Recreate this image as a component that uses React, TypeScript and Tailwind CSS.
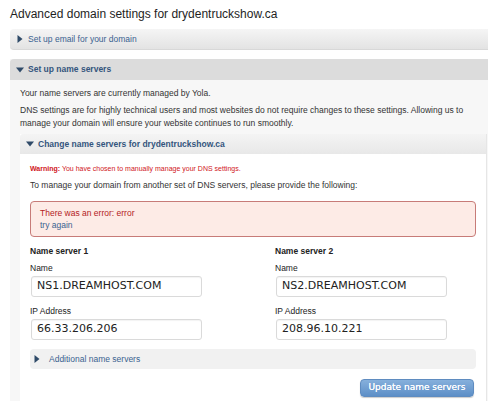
import React from 'react';

const sans = { fontFamily: '"Liberation Sans", Arial, sans-serif' };

function Arrow({ open }: { open?: boolean }) {
  // small solid triangle used by the collapsible panel headers
  return open ? (
    <svg width="8" height="6" viewBox="0 0 8 6" className="shrink-0">
      <path d="M0 0.5 L8 0.5 L4 5.5 Z" fill="#2f4a68" />
    </svg>
  ) : (
    <svg width="6" height="8" viewBox="0 0 6 8" className="shrink-0">
      <path d="M0.5 0 L5.5 4 L0.5 8 Z" fill="#2f4a68" />
    </svg>
  );
}

function Field({ label, value }: { label: string; value: string }) {
  return (
    <div>
      <div className="text-[8.5px] leading-[13px] text-[#222]">{label}</div>
      <div
        className="mt-[1px] h-[21px] w-[171px] ml-[1px] rounded-[3px] border border-[#dadada] bg-white px-[5px] flex items-center text-[11px] text-[#222] shadow-[inset_0_1px_1px_rgba(0,0,0,0.05)]"
        style={{ fontFamily: '"DejaVu Sans", sans-serif' }}
      >
        {value}
      </div>
    </div>
  );
}

export default function App() {
  return (
    <div className="w-[488px] h-[401px] overflow-hidden bg-white pl-[10px]" style={sans}>
      <h1 className="pt-[6px] text-[12px] leading-[16px] text-[#1e1e1e]">
        Advanced domain settings for drydentruckshow.ca
      </h1>

      {/* Set up email */}
      <div className="mt-[7px] h-[21px] rounded-l-[4px] bg-gradient-to-b from-[#f5f5f5] to-[#e3e3e3] border-b border-[#d8d8d8] flex items-center gap-[5px] pl-[7px]">
        <Arrow />
        <span className="text-[8.5px] text-[#3a6290]">Set up email for your domain</span>
      </div>

      {/* Set up name servers */}
      <div className="mt-[9px] bg-[#f7f7f7] h-[400px]">
        <div className="h-[21px] rounded-tl-[4px] bg-[#dcdcdc] flex items-center gap-[4px] pl-[6px]">
          <Arrow open />
          <span className="text-[8.5px] font-bold text-[#34557d]">Set up name servers</span>
        </div>

        <div className="px-[10px] text-[8.5px] leading-[13px] text-[#333]">
          <p className="pt-[7px]">Your name servers are currently managed by Yola.</p>
          <p className="mt-[4px]">
            DNS settings are for highly technical users and most websites do not require changes to these settings. Allowing us to
            manage your domain will ensure your website continues to run smoothly.
          </p>
        </div>

        {/* Change name servers */}
        <div className="mt-[4px] ml-[10px] mr-[1px] bg-white border-r border-[#e6e6e6] h-[300px]">
          <div className="h-[20px] rounded-tl-[3px] bg-gradient-to-b from-[#f4f4f4] to-[#e8e8e8] flex items-center gap-[4px] pl-[6px]">
            <Arrow open />
            <span className="text-[8.5px] font-bold text-[#34557d]">Change name servers for drydentruckshow.ca</span>
          </div>

          <div className="pl-[10px] pr-[10px]">
            <p className="pt-[9px] text-[7px] leading-[12px] text-[#d0161b]">
              <span className="font-bold">Warning:</span> You have chosen to manually manage your DNS settings.
            </p>
            <p className="mt-[4px] text-[8.5px] leading-[13px] text-[#333]">
              To manage your domain from another set of DNS servers, please provide the following:
            </p>

            <div className="mt-[9px] h-[36px] rounded-[4px] border border-[#c77b78] bg-[#fdebe6] pl-[9px] pt-[5px] text-[8.5px] leading-[12px]">
              <div className="text-[#b3211d]">There was an error: error</div>
              <div className="text-[#3a6290]">try again</div>
            </div>

            <div className="mt-[8px] flex">
              <div className="w-[245px]">
                <div className="text-[8.5px] leading-[13px] font-bold text-[#222]">Name server 1</div>
                <div className="mt-[4px]">
                  <Field label="Name" value="NS1.DREAMHOST.COM" />
                </div>
                <div className="mt-[8px]">
                  <Field label="IP Address" value="66.33.206.206" />
                </div>
              </div>
              <div>
                <div className="text-[8.5px] leading-[13px] font-bold text-[#222]">Name server 2</div>
                <div className="mt-[4px]">
                  <Field label="Name" value="NS2.DREAMHOST.COM" />
                </div>
                <div className="mt-[8px]">
                  <Field label="IP Address" value="208.96.10.221" />
                </div>
              </div>
            </div>

            <div className="mt-[9px] h-[20px] rounded-[4px] bg-[#f1f1f1] flex items-center gap-[9px] pl-[4px]">
              <Arrow />
              <span className="text-[8.5px] text-[#3a6290]">Additional name servers</span>
            </div>

            <div className="mt-[10px] flex justify-end pr-[2px]">
              <button
                className="h-[18px] w-[114px] rounded-[4px] border border-[#5f8cc0] bg-gradient-to-b from-[#86b0dc] to-[#5d8fc7] text-[9px] text-white shadow-[0_1px_1px_rgba(0,0,0,0.2)] [text-shadow:0_0_0.5px_#fff]"
                style={{ fontFamily: '"DejaVu Sans", sans-serif' }}
              >
                Update name servers
              </button>
            </div>
          </div>
        </div>
      </div>
    </div>
  );
}
